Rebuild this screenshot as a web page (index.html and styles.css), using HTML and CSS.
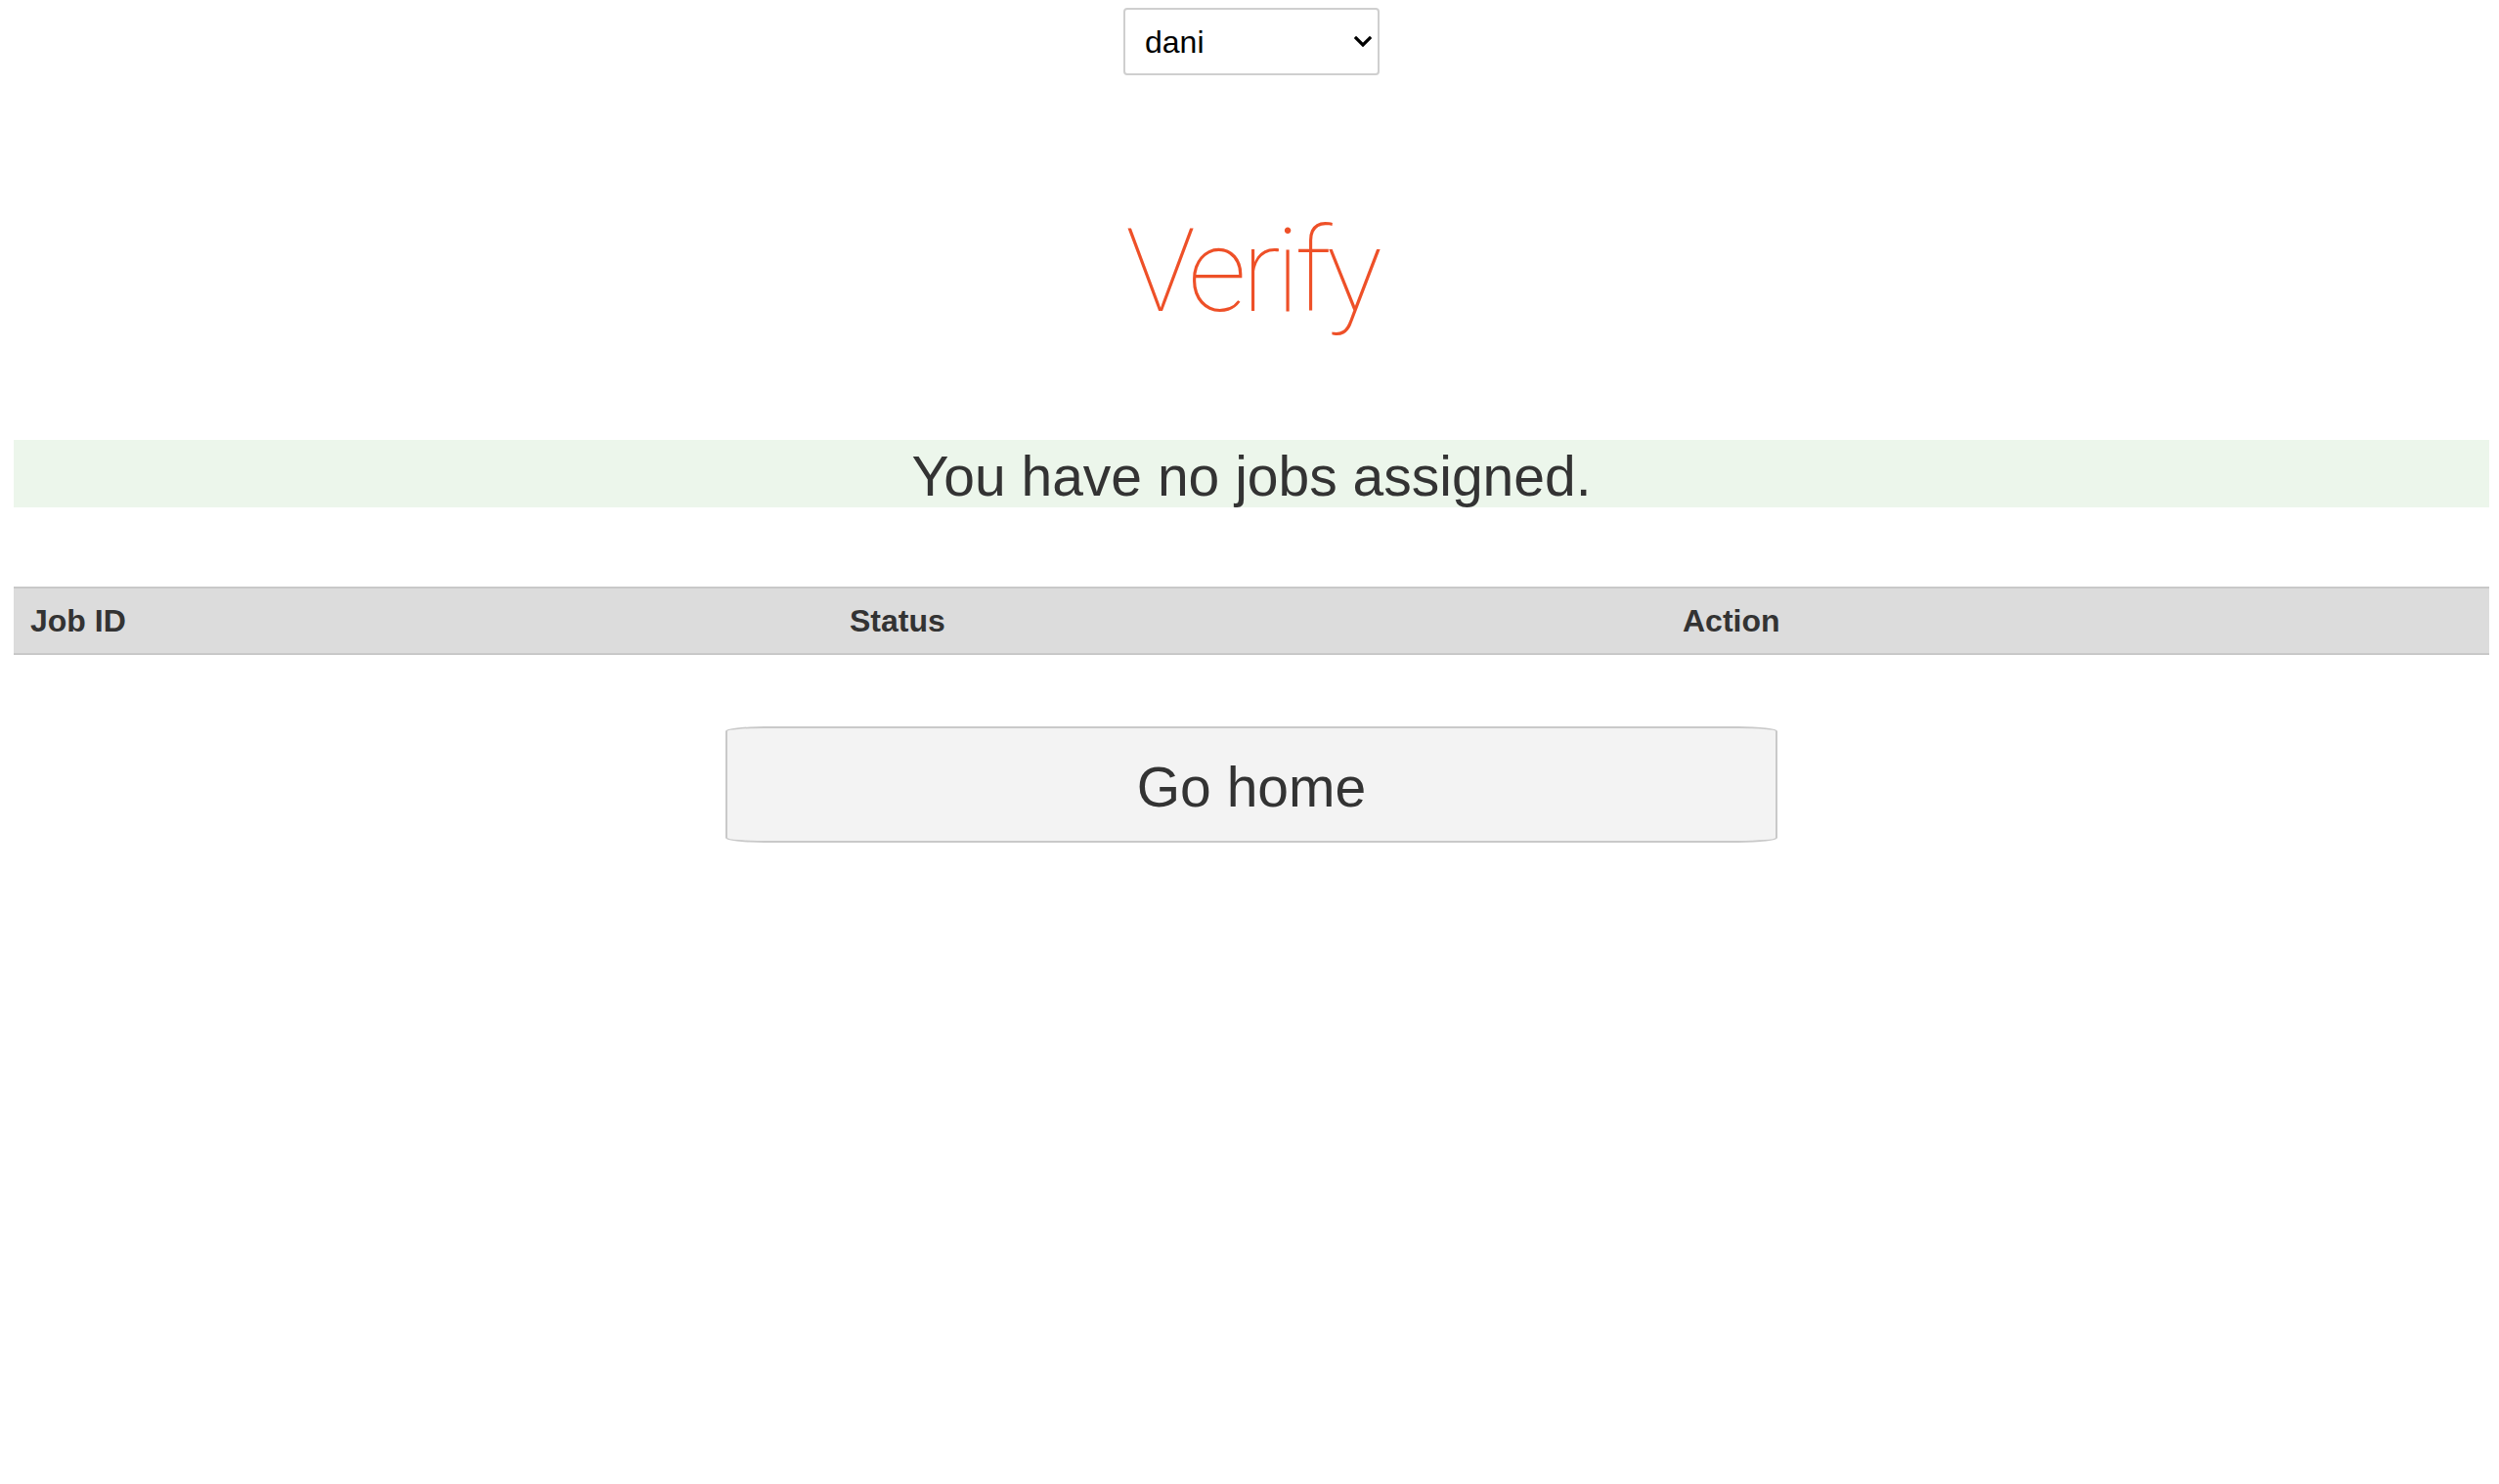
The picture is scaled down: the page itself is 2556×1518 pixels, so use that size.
FILE: index.html
```html
<!DOCTYPE html>
<html lang="en">
<head>
<meta charset="utf-8">
<title>Verify</title>
<link rel="stylesheet" href="styles.css">
</head>
<body>
<div class="user-bar">
  <div class="select-wrap">
    <select class="user-select">
      <option>dani</option>
    </select>
    <svg class="chev" width="18" height="11" viewBox="0 0 18 11"><path d="M2 2 L9 9 L16 2" fill="none" stroke="#000" stroke-width="3.2" stroke-linecap="square"/></svg>
  </div>
</div>
<h1 class="title">Verify</h1>
<div class="notice">You have no jobs assigned.</div>
<table class="jobs">
  <thead>
    <tr><th class="c1">Job ID</th><th class="c2">Status</th><th class="c3">Action</th></tr>
  </thead>
  <tbody></tbody>
</table>
<div class="actions">
  <button class="home-btn">Go home</button>
</div>
</body>
</html>
```

FILE: styles.css
```css
html, body { background: #fff; }
body {
  margin: 8px 10px 0 14px;
  font-family: "Liberation Sans", Arial, sans-serif;
  color: #333;
}
.user-bar { display: flex; justify-content: center; }
.select-wrap { position: relative; width: 262px; height: 69px; }
.user-select {
  appearance: none;
  -webkit-appearance: none;
  width: 262px;
  height: 69px;
  box-sizing: border-box;
  border: 2px solid #cfcfcf;
  border-radius: 4px;
  background: #fff;
  font-family: "Liberation Sans", Arial, sans-serif;
  font-size: 32px;
  color: #000;
  padding: 0 0 0 20px;
  margin: 0;
}
.chev { position: absolute; right: 8px; top: 29px; pointer-events: none; }
.title {
  margin: 141px 0 113px;
  text-align: center;
  font-family: Roboto, "Liberation Sans", sans-serif;
  font-weight: 100;
  font-size: 119px;
  line-height: 1;
  letter-spacing: -5px;
  color: #ee5028;
}
.notice {
  background: #ecf6eb;
  height: 69px;
  box-sizing: border-box;
  padding-top: 6px;
  line-height: 63px;
  text-align: center;
  font-size: 57px;
  color: #333;
  overflow: visible;
}
.jobs {
  margin-top: 81px;
  width: 100%;
  border-collapse: collapse;
  table-layout: fixed;
}
.jobs thead tr { background: #dcdcdc; }
.jobs th {
  border-top: 2px solid #c8c8c8;
  border-bottom: 2px solid #c8c8c8;
  height: 66px;
  box-sizing: content-box;
  padding: 0 17px;
  text-align: left;
  font-size: 32px;
  font-weight: bold;
  color: #333;
}
.jobs .c1 { width: 804px; }
.jobs .c2 { width: 818px; }
.actions { display: flex; justify-content: center; margin-top: 73px; }
.home-btn {
  width: 1076px;
  height: 119px;
  box-sizing: border-box;
  border: 2px solid #c9c9c9;
  border-radius: 40px / 5px;
  background: #f3f3f3;
  font-family: "Liberation Sans", Arial, sans-serif;
  font-size: 57px;
  color: #333;
  padding: 4px 0 0;
}
```
